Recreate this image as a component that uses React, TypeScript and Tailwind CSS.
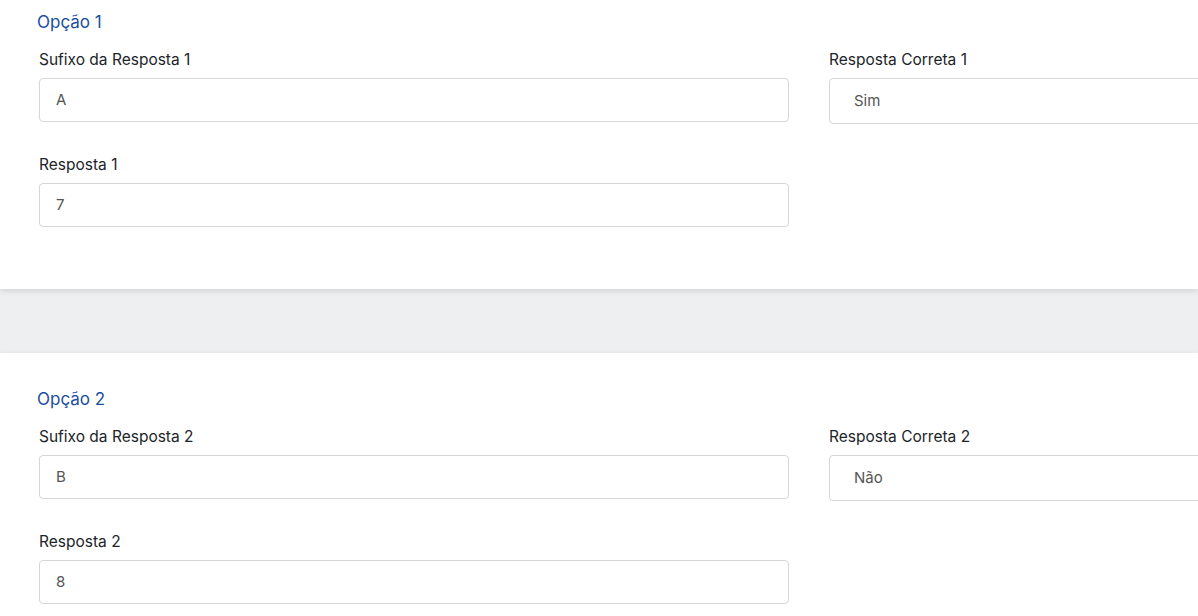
const options = [
  { n: 1, sufixo: "A", resposta: "7", correta: "Sim" },
  { n: 2, sufixo: "B", resposta: "8", correta: "Não" },
];

function Field({ label, value, tall }: { label: string; value: string; tall?: boolean }) {
  return (
    <div className="flex flex-col">
      <label className="h-5 text-[15.5px] leading-5 text-[#212529]">{label}</label>
      <div
        className={
          tall
            ? "mt-[8px] flex h-[46px] items-center rounded-[4px] border border-[#d6d6d6] bg-white pl-[24px] text-[15px] text-[#555]"
            : "mt-[8px] flex h-[44px] items-center rounded-[4px] border border-[#d6d6d6] bg-white pl-[16px] text-[15px] text-[#555]"
        }
      >
        {value}
      </div>
    </div>
  );
}

function OptionCard({ n, sufixo, resposta, correta, first }: (typeof options)[number] & { first?: boolean }) {
  return (
    <section
      className={
        first
          ? "-mt-[27px] bg-white pt-[34px] pb-[62px] pl-[37px] shadow-[0_2px_6px_rgba(0,0,0,0.12)]"
          : "bg-white pt-[34px] pb-[62px] pl-[37px] shadow-[0_2px_6px_rgba(0,0,0,0.12)]"
      }
    >
      <h3 className="h-6 text-[17px] leading-6 text-[#1b4e9e]">Opção {n}</h3>
      <div className="mt-[16px] grid grid-cols-[750px_750px] gap-x-[40px] gap-y-[31px] pl-[2px]">
        <Field label={`Sufixo da Resposta ${n}`} value={sufixo} />
        <Field label={`Resposta Correta ${n}`} value={correta} tall />
        <Field label={`Resposta ${n}`} value={resposta} />
      </div>
    </section>
  );
}

export default function App() {
  return (
    <div
      className="h-[616px] w-[1198px] overflow-hidden bg-[#eeeff1]"
      style={{ fontFamily: "Inter, 'Noto Sans', sans-serif" }}
    >
      <div className="h-[3px] bg-gradient-to-b from-[#f0f0f0] to-white" />
      <OptionCard {...options[0]} first />
      <div className="h-[64px]" />
      <OptionCard {...options[1]} />
    </div>
  );
}
